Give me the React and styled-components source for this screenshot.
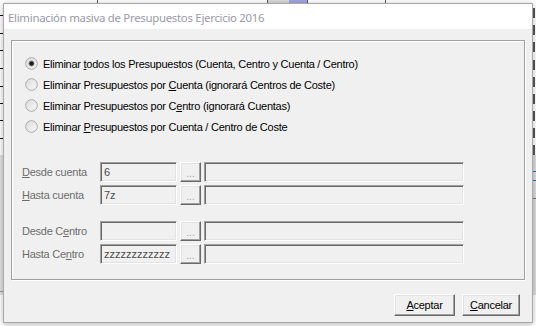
import React from "react";
import styled, { createGlobalStyle } from "styled-components";

const Global = createGlobalStyle`
  html, body { margin: 0; padding: 0; background: #ffffff; }
  body { font-family: "Liberation Sans", Arial, sans-serif; }
  *, *::before, *::after { box-sizing: border-box; }
`;

const Desktop = styled.div`
  position: relative;
  width: 536px;
  height: 326px;
  overflow: hidden;
  background: #fafafa;
`;

const BackApp = styled.svg`
  position: absolute;
  left: 0;
  top: 0;
  z-index: 0;
`;

const Window = styled.div`
  position: relative;
  z-index: 1;
  margin: 3px 0 0 3px;
  width: 530px;
  height: 320px;
  border: 1px solid #a9a9a9;
  box-shadow: 0 1px 6px rgba(0, 0, 0, 0.28);
  display: flex;
  flex-direction: column;
  background: #f0f0f0;
`;

const TitleBar = styled.div`
  flex: 0 0 25px;
  height: 25px;
  background: #ffffff;
  display: flex;
  align-items: center;
  padding: 1px 0 0 4px;
  font-family: "Noto Sans", "Open Sans", sans-serif;
  font-size: 11.4px;
  color: #9a9aa6;
  letter-spacing: -0.28px;
`;

const Body = styled.div`
  flex: 1 1 auto;
  min-height: 0;
  display: flex;
  flex-direction: column;
  padding: 11px 7px 0 7px;
  font-size: 11px;
  letter-spacing: -0.25px;
`;

const GroupBox = styled.div`
  flex: 0 0 240px;
  height: 240px;
  border: 1px solid #a0a0a0;
  box-shadow: inset 1px 1px 0 #ffffff, 1px 1px 0 #ffffff;
  padding: 12px 0 0 0;
  display: flex;
  flex-direction: column;
`;

const RadioList = styled.div`
  display: flex;
  flex-direction: column;
  padding-left: 13px;
`;

const RadioRow = styled.label`
  height: 21px;
  display: flex;
  align-items: center;
  gap: 5px;
  color: #000;
`;

const Fields = styled.div`
  display: flex;
  flex-direction: column;
  padding: 25px 0 0 10px;
`;

const FieldPair = styled.div`
  display: flex;
  flex-direction: column;
  gap: 3px;
  margin-bottom: ${(p) => (p.$last ? 0 : 16)}px;
`;

const FieldRow = styled.div`
  display: flex;
  align-items: center;
  height: 20px;
`;

const Label = styled.span`
  width: 78px;
  color: #6d6d6d;
`;

const Edit = styled.div`
  width: ${(p) => p.$w}px;
  height: 20px;
  background: #f0f0f0;
  border-top: 1px solid #a0a0a0;
  border-left: 1px solid #a0a0a0;
  border-right: 1px solid #ffffff;
  border-bottom: 1px solid #ffffff;
  box-shadow: inset 1px 1px 0 #696969, inset -1px -1px 0 #e3e3e3;
  padding: 3px 0 0 3px;
  color: #4c4c4c;
  font-size: 11px;
  line-height: 13px;
  letter-spacing: 0;
  white-space: nowrap;
  overflow: hidden;
`;

const DotsButton = styled.div`
  width: 21px;
  height: 20px;
  margin: 0 3px 0 3px;
  background: #f0f0f0;
  border-top: 1px solid #ffffff;
  border-left: 1px solid #ffffff;
  border-right: 1px solid #696969;
  border-bottom: 1px solid #696969;
  box-shadow: inset -1px -1px 0 #a0a0a0, inset 1px 1px 0 #e3e3e3;
  color: #a0a0a0;
  font-size: 10px;
  letter-spacing: 0;
  display: flex;
  align-items: center;
  justify-content: center;
  padding-top: 2px;
`;

const Footer = styled.div`
  display: flex;
  justify-content: flex-end;
  gap: 7px;
  padding: 14px 5px 0 0;
`;

const Button = styled.div`
  width: ${(p) => p.$w}px;
  height: 22px;
  background: #f0f0f0;
  border-top: 1px solid #ffffff;
  border-left: 1px solid #ffffff;
  border-right: 1px solid #696969;
  border-bottom: 1px solid #696969;
  box-shadow: inset -1px -1px 0 #a0a0a0, inset 1px 1px 0 #e3e3e3;
  display: flex;
  align-items: center;
  justify-content: center;
  color: #000;
`;

const Radio = ({ checked }) => (
  <svg width="13" height="13" viewBox="0 0 13 13">
    <defs>
      <linearGradient id="rg" x1="0" y1="0" x2="1" y2="1">
        <stop offset="0" stopColor="#d6d6d6" />
        <stop offset="1" stopColor="#ffffff" />
      </linearGradient>
    </defs>
    <circle cx="6.5" cy="6.5" r="5.8" fill="url(#rg)" stroke="#a8a8a8" strokeWidth="1" />
    <circle cx="6.5" cy="6.5" r="4.4" fill="none" stroke="#e8e8e8" strokeWidth="0.8" />
    {checked && (
      <>
        <circle cx="6.5" cy="6.5" r="2.9" fill="#8a8a8a" />
        <circle cx="6.5" cy="6.5" r="2.1" fill="#1a1a1a" />
      </>
    )}
  </svg>
);

const U = styled.span`
  text-decoration: underline;
  text-underline-offset: 1px;
`;

const options = [
  [<>Eliminar <U>t</U>odos los Presupuestos (Cuenta, Centro y Cuenta / Centro)</>, true],
  [<>Eliminar Presupuestos por <U>C</U>uenta (ignorará Centros de Coste)</>, false],
  [<>Eliminar Presupuestos por C<U>e</U>ntro (ignorará Cuentas)</>, false],
  [<>Eliminar <U>P</U>resupuestos por Cuenta / Centro de Coste</>, false],
];

const pairs = [
  [
    [<><U>D</U>esde cuenta</>, "6"],
    [<><U>H</U>asta cuenta</>, "7z"],
  ],
  [
    [<>Desde C<U>e</U>ntro</>, ""],
    [<>Hasta Ce<U>n</U>tro</>, "zzzzzzzzzzzz"],
  ],
];

export default function App() {
  return (
    <>
      <Global />
      <Desktop>
        <BackApp width="536" height="326" viewBox="0 0 536 326">
          <rect x="0" y="0" width="536" height="3" fill="#ffffff" />
          <rect x="267" y="0" width="22" height="3" fill="#d9d9d9" />
          <rect x="289" y="0" width="18" height="3" fill="#a4a4e6" />
          <line x1="0" y1="3.5" x2="536" y2="3.5" stroke="#8c8c8c" />
          {[97, 267, 307, 385].map((x) => (
            <line key={x} x1={x + 0.5} y1="0" x2={x + 0.5} y2="3" stroke="#555" />
          ))}
          <rect x="0" y="0" width="3" height="326" fill="#ffffff" />
          {[15, 33, 50, 68, 86, 103, 120, 138].map((y) => (
            <line key={y} x1="0" y1={y + 0.5} x2="3" y2={y + 0.5} stroke="#111" />
          ))}
          <rect x="0" y="155" width="3" height="140" fill="#e2e2e2" />
          <line x1="0" y1="291.5" x2="4" y2="291.5" stroke="#999" />
          <rect x="533" y="0" width="3" height="326" fill="#ffffff" />
          {[8, 25, 42, 60, 77, 94, 111, 128, 145].map((y) => (
            <line key={y} x1="534" y1={y} x2="534" y2={y + 10} stroke="#111" strokeWidth="1.4" />
          ))}
          <rect x="533" y="155" width="3" height="140" fill="#dcdcdc" />
          <line x1="533" y1="171.5" x2="536" y2="171.5" stroke="#2a6ebd" />
          <line x1="533" y1="180.5" x2="536" y2="180.5" stroke="#2a6ebd" />
          <line x1="533" y1="198.5" x2="536" y2="198.5" stroke="#777" />
        </BackApp>
        <Window>
          <TitleBar>Eliminación masiva de Presupuestos Ejercicio 2016</TitleBar>
          <Body>
            <GroupBox>
              <RadioList>
                {options.map(([text, checked], i) => (
                  <RadioRow key={i}>
                    <Radio checked={checked} />
                    <span>{text}</span>
                  </RadioRow>
                ))}
              </RadioList>
              <Fields>
                {pairs.map((pair, pi) => (
                  <FieldPair key={pi} $last={pi === pairs.length - 1}>
                    {pair.map(([label, value], ri) => (
                      <FieldRow key={ri}>
                        <Label>{label}</Label>
                        <Edit $w={77}>{value}</Edit>
                        <DotsButton>...</DotsButton>
                        <Edit $w={260} />
                      </FieldRow>
                    ))}
                  </FieldPair>
                ))}
              </Fields>
            </GroupBox>
            <Footer>
              <Button $w={61}>
                <span>
                  <U>A</U>ceptar
                </span>
              </Button>
              <Button $w={58}>
                <span>
                  <U>C</U>ancelar
                </span>
              </Button>
            </Footer>
          </Body>
        </Window>
      </Desktop>
    </>
  );
}
